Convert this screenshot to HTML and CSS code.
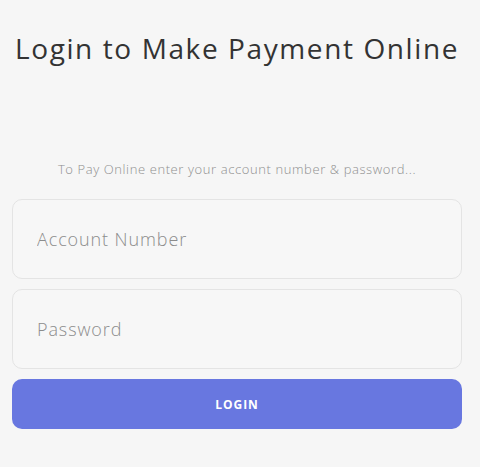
FILE: index.html
```html
<!DOCTYPE html>
<html lang="en">

<head>
    <meta charset="UTF-8">
    <meta name="viewport" content="width=device-width, initial-scale=1.0">
    <title>Login to Make Payment Online</title>
    <link rel="stylesheet" href="styles.css">
</head>

<body>
    <div class="container">
        <h1>Login to Make Payment Online</h1>
        <p class="hint">To Pay Online enter your account number &amp; password...</p>

        <form id="loginForm">
            <input type="text" class="field" placeholder="Account Number">
            <input type="password" class="field" placeholder="Password">
            <button type="submit" class="btn">LOGIN</button>
        </form>
    </div>
</body>

</html>
```

FILE: styles.css
```css
body {
    margin: 0;
    background-color: #f6f6f6;
    font-family: "Open Sans", Arial, sans-serif;
}

.container {
    width: 450px;
    padding: 0 12px;
}

h1 {
    margin: 27px 0 0;
    font-size: 28px;
    font-weight: 400;
    letter-spacing: 1.6px;
    line-height: 42px;
    color: #333;
    text-align: center;
}

.hint {
    margin: 91px 0 0;
    font-size: 13px;
    font-weight: 300;
    letter-spacing: 0.6px;
    line-height: 18px;
    color: #8f8f8f;
    text-align: center;
}

form {
    display: flex;
    flex-direction: column;
    gap: 10px;
    margin-top: 21px;
}

.field {
    box-sizing: border-box;
    height: 80px;
    padding: 0 24px;
    font-family: inherit;
    font-size: 18px;
    font-weight: 300;
    letter-spacing: 0.9px;
    color: #333;
    background-color: #f7f7f7;
    border: 1px solid #e4e4e4;
    border-radius: 10px;
    outline: none;
}

.field::placeholder {
    color: #8c8c8c;
}

.btn {
    height: 50px;
    font-family: inherit;
    font-size: 12px;
    font-weight: 700;
    letter-spacing: 1px;
    color: #fff;
    background-color: #6877e0;
    border: none;
    border-radius: 10px;
    cursor: pointer;
}
```
